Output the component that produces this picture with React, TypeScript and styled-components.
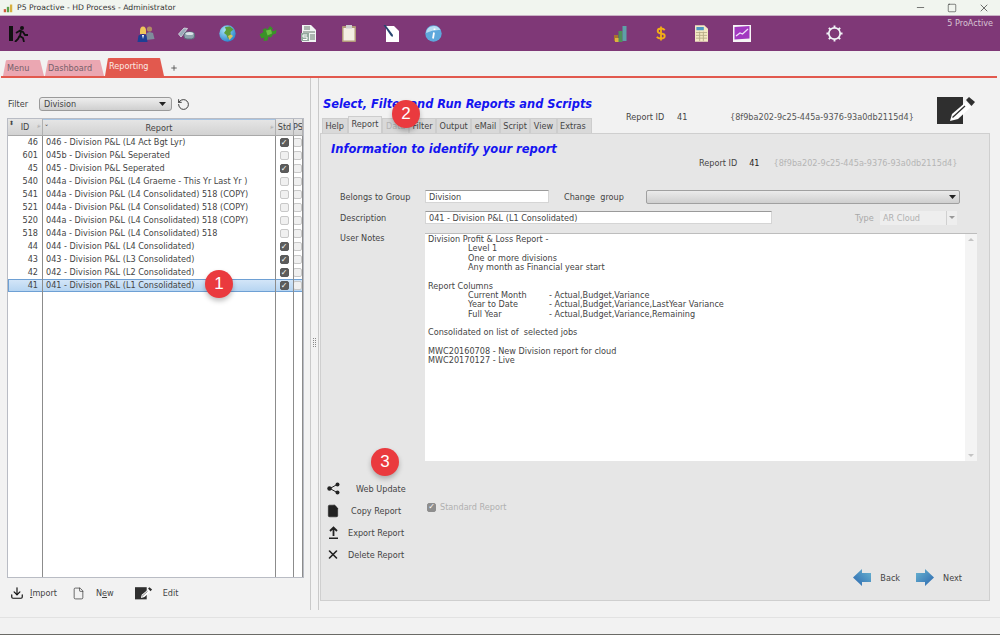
import React from "react";
import styled, { createGlobalStyle } from "styled-components";
import { Download, File, Minus, Plus, RotateCcw, Square, X } from "lucide-react";

type ReportRow = {
  id: string;
  name: string;
  std: boolean;
  selected?: boolean;
};

const reports: ReportRow[] = [
  { id: "46", name: "046 - Division P&L (L4 Act Bgt Lyr)", std: true },
  { id: "601", name: "045b - Division P&L Seperated", std: false },
  { id: "45", name: "045 - Division P&L Seperated", std: true },
  { id: "540", name: "044a - Division P&L (L4 Graeme - This Yr Last Yr )", std: false },
  { id: "541", name: "044a - Division P&L (L4 Consolidated) 518 (COPY)", std: false },
  { id: "521", name: "044a - Division P&L (L4 Consolidated) 518 (COPY)", std: false },
  { id: "520", name: "044a - Division P&L (L4 Consolidated) 518 (COPY)", std: false },
  { id: "518", name: "044a - Division P&L (L4 Consolidated) 518", std: false },
  { id: "44", name: "044 - Division P&L (L4 Consolidated)", std: true },
  { id: "43", name: "043 - Division P&L (L3 Consolidated)", std: true },
  { id: "42", name: "042 - Division P&L (L2 Consolidated)", std: true },
  { id: "41", name: "041 - Division P&L (L1 Consolidated)", std: true, selected: true },
];

const wizardTabs = ["Help", "Report", "Data", "Filter", "Output", "eMail", "Script", "View", "Extras"];

const GlobalStyle = createGlobalStyle`
  html, body {
    margin: 0;
    padding: 0;
    width: 1000px;
    height: 635px;
    overflow: hidden;
    background: #f2f2f2;
    font-family: "DejaVu Sans", sans-serif;
    font-size: 8.15px;
    color: #444;
  }
`;

const EditIcon = ({ small }: { small?: boolean }) => (
  <svg width={small ? 18 : 40} height={small ? 13 : 28} viewBox="0 0 40 28">
    <rect x="0" y="0" width="26" height="27" fill="#2f2f2f" />
    <path d="M13 24 L15 17 L29 5 L34 10 L21 22 Z" fill="#fff" />
    <path d="M15.500 20.500 L28 9" stroke="#2f2f2f" strokeWidth="1.300" />
    <path d="M29 3 L32 0 L38 5 L34.500 9 Z" fill="#2f2f2f" />
  </svg>
);

const ExitIcon = () => (
  <svg width="20" height="16" viewBox="0 0 20 16">
    <rect x="0" y="0" width="4" height="15" fill="#111" />
    <circle cx="13" cy="2" r="2" fill="#111" />
    <path d="M7 7 L11 4.500 L14 6 L16 9 L19 9 M12 5 L11 10 L14 12 L15 16 M10.500 10 L9 13 L6 16" stroke="#111" strokeWidth="1.800" fill="none" />
  </svg>
);

const PeopleIcon = () => (
  <svg width="18" height="16" viewBox="0 0 18 16">
    <circle cx="12.500" cy="3" r="2.600" fill="#b08a66" />
    <path d="M9 14 L9.500 7 L12.500 6 L16 7 L17.500 13 Z" fill="#7f8c9c" />
    <path d="M3 5 Q3 0.500 6 0.500 Q9 0.500 9 5 L9 8 L3 8 Z" fill="#efc75a" />
    <path d="M0.500 16 L1.500 9.500 L6 8 L9.500 9.500 L10.500 16 Z" fill="#1d3f94" />
    <path d="M5 9 L7 9 L6 13 Z" fill="#fff" />
  </svg>
);

const LinkIcon = () => (
  <svg width="17" height="13" viewBox="0 0 17 13">
    <path d="M0.500 7 L6 1 L9.500 1.500 L5 7.500 L3 10 Z" fill="#9aabb8" stroke="#e6ecef" strokeWidth="0.700" />
    <rect x="6" y="5" width="10.500" height="7" rx="3" fill="#8fa2ae" stroke="#5b6f7c" strokeWidth="1" />
    <ellipse cx="11.500" cy="6.500" rx="4" ry="1.600" fill="#dbe4e9" />
  </svg>
);

const GlobeIcon = () => (
  <svg width="17" height="17" viewBox="0 0 17 17">
    <defs>
      <radialGradient id="globeSea" cx="0.350" cy="0.300" r="0.800">
        <stop offset="0" stopColor="#a8e2f5" />
        <stop offset="1" stopColor="#1f7fca" />
      </radialGradient>
    </defs>
    <circle cx="8.500" cy="8.500" r="8.200" fill="url(#globeSea)" />
    <path d="M6 2 L11 1.500 L14.500 4.500 L11.500 7 L12 10.500 L9 14 L7.500 10 L5 8 L7 5 Z" fill="#5c9e3a" />
    <path d="M9 11 L12 9.500 L14 11 L10.500 15 Z" fill="#dcc35f" />
  </svg>
);

const PuzzleIcon = () => (
  <svg width="18" height="17" viewBox="0 0 18 16">
    <path d="M0.500 9 L4.500 6.500 L3.500 4 L7 2.500 L8 4.500 L11 0.500 L14 3 L12.500 5 L15 5.500 L17.500 4 L17 8 L14 9 L12 12 L9.500 11 L8.500 15 L4.500 15.500 L5.500 12 L2.500 13 Z" fill="#3a9228" />
    <path d="M7 5 L12 4 L13 8 L8.500 10 Z" fill="#6cc044" />
  </svg>
);

const InvoiceIcon = () => (
  <svg width="15" height="17" viewBox="0 0 15 17">
    <path d="M1 0 H10 L15 5 V17 H1 Z" fill="#f1f4f3" />
    <path d="M3 2 H9 M3 4 H9 M2 7 H14 M9 10 H14 M9 12 H14 M9 14 H14" stroke="#69786f" strokeWidth="1" />
    <path d="M0 8 H8 V16 H0 Z" fill="#93a89e" />
    <path d="M6 10 H2 V12 H6 V14.500 H2" stroke="#fff" strokeWidth="1" fill="none" />
  </svg>
);

const ClipboardIcon = () => (
  <svg width="14" height="17" viewBox="0 0 14 17">
    <rect x="0" y="1" width="14" height="16" rx="1" fill="#b39a7a" />
    <rect x="1.500" y="3" width="11" height="12.500" fill="#f4efe3" />
    <rect x="4" y="0" width="6" height="3.500" fill="#cfcfcf" />
  </svg>
);

const NoteIcon = () => (
  <svg width="17" height="17" viewBox="0 0 17 17">
    <path d="M3 1 H11 L16 6 V17 H3 Z" fill="#fff" />
    <path d="M0.500 0 L2.500 0 L10 10 L9.500 12 L8 11 Z" fill="#26456f" />
  </svg>
);

const InfoIcon = () => (
  <svg width="17" height="17" viewBox="0 0 17 17">
    <circle cx="8.500" cy="8.500" r="8.200" fill="#5ea8dc" />
    <path d="M1 8 A7.800 7.800 0 0 1 15.500 5 Q8 4.500 1 8 Z" fill="#b9dcf2" />
    <path d="M9.500 3.500 V5 M9 7.500 L8 13.500" stroke="#fff" strokeWidth="1.800" />
  </svg>
);

const ChartIcon = () => (
  <svg width="13" height="16" viewBox="0 0 13 16">
    <rect x="0" y="9" width="4" height="6" fill="#a8742c" />
    <rect x="1" y="12" width="4" height="4" fill="#e0b040" />
    <rect x="4.500" y="5" width="4" height="11" fill="#4f8f58" />
    <rect x="8.500" y="0" width="4" height="15" fill="#5ea0a8" />
  </svg>
);

const DollarIcon = () => (
  <svg width="10" height="17" viewBox="0 0 12 18">
    <path d="M10.500 5 Q9 3 6 3 Q2 3 2 6 Q2 8.500 6 9 Q10.500 9.500 10.500 12 Q10.500 15 6 15 Q2.500 15 1 13 M6 0.500 V17.500" stroke="#f2ae16" strokeWidth="2.200" fill="none" />
  </svg>
);

const SheetIcon = () => (
  <svg width="13" height="17" viewBox="0 0 14 18">
    <path d="M0 0 H10 L14 4 V18 H0 Z" fill="#f4e8c4" />
    <rect x="1.500" y="2" width="8" height="3.500" fill="#4f97c4" />
    <path d="M1 8 H13 M1 11 H13 M1 14 H13 M5 7 V17 M9 7 V17" stroke="#b9ad88" strokeWidth="1" />
  </svg>
);

const GraphIcon = () => (
  <svg width="18" height="17" viewBox="0 0 18 17">
    <rect x="0" y="0" width="18" height="17" fill="#f6f6f6" />
    <path d="M1.500 2 L16.500 1 V13.500 L1.500 14.500 Z" fill="#a238c0" />
    <path d="M3 11 L7 8 L9.500 9 L15 4" stroke="#f0e0f6" strokeWidth="1.300" fill="none" />
  </svg>
);

const GearIcon = () => (
  <svg width="17" height="17" viewBox="0 0 18 18">
    <circle cx="9" cy="9" r="6" fill="none" stroke="#f2f4f8" strokeWidth="1.800" />
    <path d="M9 0.500 V3 M9 15 V17.500 M0.500 9 H3 M15 9 H17.500 M3 3 L4.800 4.800 M13.200 13.200 L15 15 M3 15 L4.800 13.200 M13.200 4.800 L15 3" stroke="#f2f4f8" strokeWidth="2" />
  </svg>
);

const ShareIcon = () => (
  <svg width="13" height="13" viewBox="0 0 13 13">
    <path d="M10 2.500 L3 6.500 L10 10.500" stroke="#222" strokeWidth="1" fill="none" />
    <circle cx="10.500" cy="2.500" r="2" fill="#222" />
    <circle cx="2.500" cy="6.500" r="2.200" fill="#222" />
    <circle cx="10.500" cy="10.500" r="2" fill="#222" />
  </svg>
);

const ExportIcon = () => (
  <svg width="11" height="13" viewBox="0 0 11 13">
    <path d="M5.500 10 V1.500 M2 5 L5.500 1.500 L9 5" stroke="#222" strokeWidth="1.800" fill="none" />
    <rect x="1" y="11.500" width="9" height="1.500" fill="#222" />
  </svg>
);

const ArrowIcon = ({ back }: { back?: boolean }) => (
  <svg width="18" height="17" viewBox="0 0 18 17" style={back ? { transform: "scaleX(-1)" } : undefined}>
    <defs>
      <linearGradient id={back ? "arrB" : "arrN"} x1="0" x2="1" y1="0" y2="1">
        <stop offset="0" stopColor="#6bb6d2" />
        <stop offset="1" stopColor="#2a66ae" />
      </linearGradient>
    </defs>
    <path d="M0 4 H9 V0 L18 8.500 L9 17 V13 H0 Z" fill={`url(#${back ? "arrB" : "arrN"})`} />
  </svg>
);

const SelectArrow = () => (
  <svg width="7" height="4" viewBox="0 0 7 4">
    <path d="M0 0 H7 L3.500 4 Z" fill="#222" />
  </svg>
);

const App: React.FC = () => {
  return (
    <Page>
      <GlobalStyle />
      <TitleBar>
        <TitleLeft>
          <svg width="10" height="10" viewBox="0 0 13 11">
            <rect x="1" y="7" width="3" height="4" fill="#d05a3c" />
            <rect x="5" y="4" width="3" height="7" fill="#5ca04c" />
            <rect x="9" y="1" width="3" height="10" fill="#d8b040" />
          </svg>
          <span>P5 Proactive - HD Process - Administrator</span>
        </TitleLeft>
        <WindowButtons>
          <Minus size={11} strokeWidth={1.2} />
          <Square size={10} strokeWidth={1.2} />
          <X size={12} strokeWidth={1.2} />
        </WindowButtons>
      </TitleBar>

      <Toolbar>
        <ExitSlot>
          <ExitIcon />
        </ExitSlot>
        <ToolGroup $offset={91}>
          <ToolSlot><PeopleIcon /></ToolSlot>
          <ToolSlot><LinkIcon /></ToolSlot>
          <ToolSlot><GlobeIcon /></ToolSlot>
          <ToolSlot><PuzzleIcon /></ToolSlot>
          <ToolSlot><InvoiceIcon /></ToolSlot>
          <ToolSlot><ClipboardIcon /></ToolSlot>
          <ToolSlot $wide><NoteIcon /></ToolSlot>
          <ToolSlot><InfoIcon /></ToolSlot>
        </ToolGroup>
        <ToolGroup $offset={147}>
          <ToolSlot><ChartIcon /></ToolSlot>
          <ToolSlot><DollarIcon /></ToolSlot>
          <ToolSlot><SheetIcon /></ToolSlot>
          <ToolSlot><GraphIcon /></ToolSlot>
        </ToolGroup>
        <ToolGroup $offset={52}>
          <ToolSlot><GearIcon /></ToolSlot>
        </ToolGroup>
        <Brand>5 ProActive</Brand>
      </Toolbar>

      <TabStrip>
        <AppTab $w={41} $left={4}>Menu</AppTab>
        <AppTab $w={59} $left={3}>Dashboard</AppTab>
        <AppTab $active $w={59} $left={4}>Reporting</AppTab>
        <AddTab><Plus size={8} strokeWidth={2.4} /></AddTab>
      </TabStrip>

      <Workspace>
        <LeftPane>
          <FilterRow>
            <FilterLabel>Filter</FilterLabel>
            <FilterSelect>
              <span>Division</span>
              <SelectArrow />
            </FilterSelect>
            <RotateCcw size={13} color="#222" strokeWidth={1.6} />
          </FilterRow>

          <Table>
            <HeaderRow>
              <HeaderCell><SortMark>⬍</SortMark>ID<SearchMark>⌕</SearchMark></HeaderCell>
              <HeaderCell $current><SortMark>⌄</SortMark>Report<SearchMark>⌕</SearchMark></HeaderCell>
              <HeaderCell>Std</HeaderCell>
              <HeaderCell>PS</HeaderCell>
            </HeaderRow>
            <TableBody>
              {reports.map((r) => (
                <Row key={r.id} $selected={r.selected}>
                  <IdCell>{r.id}</IdCell>
                  <NameCell>{r.name}</NameCell>
                  <CheckCell><Check $on={r.std} /></CheckCell>
                  <CheckCell><Check /></CheckCell>
                </Row>
              ))}
              <FillerRow>
                <IdCell />
                <NameCell />
                <CheckCell />
                <CheckCell />
              </FillerRow>
            </TableBody>
          </Table>

          <TableActions>
            <TableAction>
              <Download size={14} color="#111" strokeWidth={2} />
              <span><u>I</u>mport</span>
            </TableAction>
            <TableAction $gap={11} $left={15}>
              <File size={13} color="#333" strokeWidth={1.3} />
              <span>N<u>e</u>w</span>
            </TableAction>
            <TableAction $gap={10} $left={21}>
              <EditIcon small />
              <span>Edit</span>
            </TableAction>
          </TableActions>
        </LeftPane>

        <Splitter>
          <SplitHandle />
        </Splitter>

        <RightPane>
          <TitleRow>
            <MainHeading>Select, Filter and Run Reports and Scripts</MainHeading>
            <EditIconWrap><EditIcon /></EditIconWrap>
          </TitleRow>

          <TabsRow>
            <WizardTabs>
              {wizardTabs.map((t) => (
                <WizardTab key={t} $active={t === "Report"} $disabled={t === "Data"}>{t}</WizardTab>
              ))}
            </WizardTabs>
            <OuterId>
              <IdLabel>Report ID</IdLabel>
              <IdValue>41</IdValue>
              <Guid>{"{8f9ba202-9c25-445a-9376-93a0db2115d4}"}</Guid>
            </OuterId>
          </TabsRow>

          <Panel>
            <SubHeading>Information to identify your report</SubHeading>
            <InnerId>
              <span>Report ID</span>
              <InnerIdValue>41</InnerIdValue>
              <InnerGuid>{"{8f9ba202-9c25-445a-9376-93a0db2115d4}"}</InnerGuid>
            </InnerId>

            <FormRow $top={22}>
              <FieldLabel>Belongs to Group</FieldLabel>
              <TextField $w={124}>Division</TextField>
              <ChangeLabel>Change&nbsp; group</ChangeLabel>
              <GroupSelect><SelectArrow /></GroupSelect>
            </FormRow>
            <FormRow $top={8}>
              <FieldLabel>Description</FieldLabel>
              <TextField $w={347}>041 - Division P&amp;L (L1 Consolidated)</TextField>
              <TypeLabel>Type</TypeLabel>
              <TypeSelect>
                <span>AR Cloud</span>
                <TypeArrow />
              </TypeSelect>
            </FormRow>
            <NotesRow>
              <FieldLabel>User Notes</FieldLabel>
              <Notes>
                <NoteBody>
                  <NoteLine>Division Profit &amp; Loss Report -</NoteLine>
                  <NoteLine $indent>Level 1</NoteLine>
                  <NoteLine $indent>One or more divisions</NoteLine>
                  <NoteLine $indent>Any month as Financial year start</NoteLine>
                  <NoteLine />
                  <NoteLine>Report Columns</NoteLine>
                  <NoteLine $indent><NoteKey>Current Month</NoteKey>- Actual,Budget,Variance</NoteLine>
                  <NoteLine $indent><NoteKey>Year to Date</NoteKey>- Actual,Budget,Variance,LastYear Variance</NoteLine>
                  <NoteLine $indent><NoteKey>Full Year</NoteKey>- Actual,Budget,Variance,Remaining</NoteLine>
                  <NoteLine />
                  <NoteLine>Consolidated on list of&nbsp; selected jobs</NoteLine>
                  <NoteLine />
                  <NoteLine>MWC20160708 - New Division report for cloud</NoteLine>
                  <NoteLine>MWC20170127 - Live</NoteLine>
                </NoteBody>
                <NoteScroll>
                  <ScrollArrow $dir="up" />
                  <ScrollArrow $dir="down" />
                </NoteScroll>
              </Notes>
            </NotesRow>

            <LowerArea>
              <ActionList>
                <ActionItem>
                  <ActionIcon><ShareIcon /></ActionIcon>
                  <ActionText $pad={16}>Web Update</ActionText>
                </ActionItem>
                <ActionItem>
                  <ActionIcon><File size={14} color="#222" fill="#222" strokeWidth={1} /></ActionIcon>
                  <ActionText $pad={11}>Copy Report</ActionText>
                </ActionItem>
                <ActionItem>
                  <ActionIcon><ExportIcon /></ActionIcon>
                  <ActionText $pad={8}>Export Report</ActionText>
                </ActionItem>
                <ActionItem>
                  <ActionIcon><X size={17} color="#222" strokeWidth={2.8} /></ActionIcon>
                  <ActionText $pad={8}>Delete Report</ActionText>
                </ActionItem>
              </ActionList>
              <StandardCheck>
                <Check $on $muted />
                <span>Standard Report</span>
              </StandardCheck>
            </LowerArea>

            <WizardNav>
              <NavButton>
                <ArrowIcon back />
                <span>Back</span>
              </NavButton>
              <NavButton>
                <ArrowIcon />
                <span>Next</span>
              </NavButton>
            </WizardNav>
          </Panel>
        </RightPane>
      </Workspace>

      <StatusBar />

      <Badge $x={219} $y={284}>1</Badge>
      <Badge $x={406} $y={114}>2</Badge>
      <Badge $x={385} $y={462}>3</Badge>
    </Page>
  );
};

export default App;

const Page = styled.div`
  position: relative;
  width: 1000px;
  height: 635px;
  display: flex;
  flex-direction: column;
  overflow: hidden;
  border-bottom: 1px solid #6a6a66;
  box-sizing: border-box;
`;

const TitleBar = styled.div`
  height: 15px;
  flex: none;
  display: flex;
  justify-content: space-between;
  align-items: center;
  background: #f1f5ef;
  font-size: 7.700px;
  color: #333;
`;

const TitleLeft = styled.div`
  display: flex;
  align-items: center;
  gap: 4px;
  padding-left: 3px;
`;

const WindowButtons = styled.div`
  display: flex;
  align-items: center;
  gap: 21px;
  padding-right: 10px;
  color: #111;
`;

const Toolbar = styled.div`
  position: relative;
  height: 36px;
  flex: none;
  display: flex;
  align-items: center;
  background: #7f3877;
  border-top: 1px solid #c9b3c6;
  box-sizing: border-box;
`;

const ExitSlot = styled.div`
  width: 35px;
  padding-left: 9px;
  box-sizing: border-box;
  display: flex;
`;

const ToolGroup = styled.div<{ $offset: number }>`
  display: flex;
  align-items: center;
  margin-left: ${(p) => p.$offset}px;
`;

const ToolSlot = styled.div<{ $wide?: boolean }>`
  width: ${(p) => (p.$wide ? 44 : 40.500)}px;
  display: flex;
  justify-content: center;
`;

const Brand = styled.div`
  position: absolute;
  right: 7px;
  top: 2px;
  color: #d8c4d4;
`;

const TabStrip = styled.div`
  height: 27px;
  flex: none;
  display: flex;
  align-items: flex-end;
  padding-left: 2px;
  border-bottom: 2px solid #e2594e;
  box-sizing: border-box;
  margin-left: 1px;
  margin-right: 3px;
`;

const AppTab = styled.div<{ $active?: boolean; $w: number; $left: number }>`
  width: ${(p) => p.$w}px;
  height: ${(p) => (p.$active ? 18 : 16)}px;
  line-height: ${(p) => (p.$active ? 17 : 16)}px;
  padding-left: ${(p) => p.$left}px;
  margin-right: ${(p) => (p.$active ? 0 : 1)}px;
  box-sizing: border-box;
  background: ${(p) => (p.$active ? "#e2594e" : "#eba7b2")};
  color: ${(p) => (p.$active ? "#fbe9e6" : "#76606a")};
  border-radius: 5px 5px 0 0;
  clip-path: polygon(3px 0, calc(100% - 4px) 0, 100% 100%, 0 100%);
`;

const AddTab = styled.div`
  display: flex;
  align-items: center;
  height: 16px;
  margin-left: 6px;
  color: #444;
`;

const Workspace = styled.div`
  flex: 1;
  min-height: 0;
  display: flex;
  background: #f2f2f2;
`;

const LeftPane = styled.div`
  width: 310px;
  flex: none;
  display: flex;
  flex-direction: column;
  padding: 18px 6px 0 7px;
  box-sizing: border-box;
`;

const FilterRow = styled.div`
  height: 16px;
  display: flex;
  align-items: center;
  margin-bottom: 6px;
`;

const FilterLabel = styled.div`
  width: 32px;
  padding-left: 1px;
  box-sizing: border-box;
`;

const FilterSelect = styled.div`
  width: 133px;
  height: 14px;
  margin-right: 5px;
  padding: 0 5px 0 4px;
  display: flex;
  align-items: center;
  justify-content: space-between;
  box-sizing: border-box;
  border: 1px solid #9a9a9a;
  border-radius: 3px;
  background: linear-gradient(#eeeeee, #cfcfcf);
`;

const Table = styled.div`
  width: 297px;
  height: 460px;
  display: flex;
  flex-direction: column;
  border: 1px solid #b9bcc4;
  box-sizing: border-box;
  background: #fff;
`;

const HeaderRow = styled.div`
  height: 17px;
  flex: none;
  display: grid;
  grid-template-columns: 35px 233px 18px 1fr;
  box-sizing: border-box;
  background: linear-gradient(#e6e6e6, #d2d2d2);
  border-bottom: 1px solid #a9a9a9;
`;

const HeaderCell = styled.div<{ $current?: boolean }>`
  position: relative;
  display: flex;
  align-items: center;
  justify-content: center;
  overflow: hidden;
  border-right: 1px solid #b0b0b0;
  border-top: ${(p) => (p.$current ? "1px solid #a8c4e2" : "none")};
  color: #444;
`;

const SortMark = styled.span`
  position: absolute;
  left: 1px;
  top: 0;
  font-size: 6px;
`;

const SearchMark = styled.span`
  position: absolute;
  right: 1px;
  top: 3px;
  font-size: 7px;
  color: #888;
`;

const TableBody = styled.div`
  flex: 1;
  min-height: 0;
  display: flex;
  flex-direction: column;
`;

const Row = styled.div<{ $selected?: boolean }>`
  height: 13px;
  flex: none;
  display: grid;
  grid-template-columns: 35px 233px 18px 1fr;
  background: ${(p) => (p.$selected ? "linear-gradient(#d5e7f8, #b4d3f1)" : "transparent")};
  box-shadow: ${(p) => (p.$selected ? "inset 0 0 0 1px #6ea0d4" : "none")};
`;

const FillerRow = styled(Row)`
  flex: 1;
  height: auto;
`;

const IdCell = styled.div`
  line-height: 13px;
  text-align: right;
  padding-right: 4px;
  box-sizing: border-box;
  border-right: 1px solid #8c8c8c;
`;

const NameCell = styled.div`
  line-height: 13px;
  padding-left: 3px;
  white-space: nowrap;
  overflow: hidden;
  border-right: 1px solid #8c8c8c;
`;

const CheckCell = styled.div`
  display: flex;
  justify-content: center;
  align-items: center;
  padding-right: 1px;
  border-right: 1px solid #8c8c8c;
  overflow: hidden;
`;

const Check = styled.span<{ $on?: boolean; $muted?: boolean }>`
  width: 9px;
  height: 9px;
  flex: none;
  box-sizing: border-box;
  border-radius: 2px;
  display: inline-flex;
  align-items: center;
  justify-content: center;
  font-size: 8px;
  font-weight: 700;
  line-height: 1;
  border: 1px solid ${(p) => (p.$on ? (p.$muted ? "#8e8e8e" : "#5a5a5a") : "#c8c8c8")};
  background: ${(p) => (p.$on ? (p.$muted ? "#8e8e8e" : "#5c5c5c") : "#f0f0f0")};
  color: #fff;
  &::after {
    content: "${(p) => (p.$on ? "✓" : "")}";
  }
`;

const TableActions = styled.div`
  display: flex;
  align-items: center;
  padding: 8px 0 0 3px;
`;

const TableAction = styled.div<{ $gap?: number; $left?: number }>`
  display: flex;
  align-items: center;
  gap: ${(p) => p.$gap ?? 6}px;
  margin-left: ${(p) => p.$left ?? 0}px;
`;

const Splitter = styled.div`
  width: 7px;
  flex: none;
  height: 532px;
  display: flex;
  align-items: flex-start;
  justify-content: center;
  border-left: 1px solid #c9c9c9;
  border-right: 1px solid #c9c9c9;
`;

const SplitHandle = styled.div`
  width: 1px;
  height: 9px;
  margin-top: 260px;
  border-left: 1px dotted #888;
  border-right: 1px dotted #888;
`;

const RightPane = styled.div`
  flex: 1;
  min-width: 0;
  display: flex;
  flex-direction: column;
  padding: 18px 10px 16px 1px;
`;

const TitleRow = styled.div`
  display: flex;
  justify-content: space-between;
  height: 20px;
  padding-left: 3px;
`;

const MainHeading = styled.div`
  font-size: 11.400px;
  font-weight: 700;
  font-style: italic;
  color: #1414f0;
  line-height: 16px;
`;

const EditIconWrap = styled.div`
  margin-top: 1px;
  margin-right: 13px;
  position: relative;
  z-index: 1;
`;

const TabsRow = styled.div`
  height: 17px;
  display: flex;
  align-items: flex-end;
  margin-left: 2px;
  position: relative;
`;

const WizardTabs = styled.div`
  display: flex;
  align-items: flex-end;
`;

const WizardTab = styled.div<{ $active?: boolean; $disabled?: boolean }>`
  height: ${(p) => (p.$active ? 17 : 15)}px;
  line-height: 14px;
  padding: 0 ${(p) => (p.$active ? 3 : 2.500)}px;
  box-sizing: border-box;
  background: ${(p) => (p.$active ? "#e6e6e6" : "#d9d9d9")};
  border: 1px solid #cdcdcd;
  border-bottom: none;
  color: ${(p) => (p.$disabled ? "#b5b5b5" : "#444")};
  &:last-child {
    padding-right: 5px;
  }
`;

const OuterId = styled.div`
  position: absolute;
  left: 304px;
  top: -4px;
  display: flex;
`;

const IdLabel = styled.span`
  width: 51px;
`;

const IdValue = styled.span`
  width: 53px;
`;

const Guid = styled.span`
  color: #555;
  white-space: nowrap;
`;

const Panel = styled.div`
  flex: 1;
  min-height: 0;
  display: flex;
  flex-direction: column;
  padding: 7px 12px 14px 10px;
  box-sizing: border-box;
  background: #e6e6e6;
  border: 1px solid #cfcfcf;
`;

const SubHeading = styled.div`
  font-size: 11.500px;
  font-weight: 700;
  font-style: italic;
  color: #1414f0;
  line-height: 17px;
`;

const InnerId = styled.div`
  display: flex;
  padding-left: 368px;
  line-height: 10px;
  height: 10px;
`;

const InnerIdValue = styled.span`
  margin-left: 12px;
  color: #222;
`;

const InnerGuid = styled.span`
  margin-left: 14px;
  color: #b5b5b5;
  white-space: nowrap;
`;

const FormRow = styled.div<{ $top: number }>`
  display: flex;
  align-items: center;
  height: 13px;
  margin-top: ${(p) => p.$top}px;
  padding-left: 9px;
`;

const FieldLabel = styled.div`
  width: 85px;
  flex: none;
`;

const TextField = styled.div<{ $w: number }>`
  width: ${(p) => p.$w}px;
  height: 13px;
  line-height: 12px;
  padding-left: 3px;
  box-sizing: border-box;
  background: #fff;
  border: 1px solid #d5d5d5;
  border-top-color: #9a9a9a;
  white-space: nowrap;
`;

const ChangeLabel = styled.div`
  width: 82px;
  margin-left: 15px;
  flex: none;
`;

const GroupSelect = styled.div`
  width: 314px;
  height: 14px;
  display: flex;
  align-items: center;
  justify-content: flex-end;
  padding-right: 3px;
  box-sizing: border-box;
  border: 1px solid #a0a0a0;
  border-radius: 2px;
  background: linear-gradient(#ebebeb, #cfcfcf);
`;

const TypeLabel = styled.div`
  margin-left: 83px;
  width: 25px;
  flex: none;
  color: #a8a8a8;
`;

const TypeSelect = styled.div`
  width: 77px;
  height: 14px;
  display: flex;
  align-items: center;
  justify-content: space-between;
  padding-left: 3px;
  box-sizing: border-box;
  background: #eeeeee;
  color: #b0b0b0;
`;

const TypeArrow = styled.span`
  width: 10px;
  height: 14px;
  border-left: 1px solid #d0d0d0;
  display: flex;
  align-items: center;
  justify-content: center;
  &::after {
    content: "";
    border-left: 3px solid transparent;
    border-right: 3px solid transparent;
    border-top: 3px solid #999;
  }
`;

const NotesRow = styled.div`
  display: flex;
  margin-top: 9px;
  height: 228px;
  padding-left: 9px;
`;

const Notes = styled.div`
  width: 553px;
  display: flex;
  background: #fff;
  border-top: 1px solid #bdbdbd;
  box-sizing: border-box;
`;

const NoteBody = styled.div`
  flex: 1;
  padding: 1px 3px;
  line-height: 9.350px;
`;

const NoteLine = styled.div<{ $indent?: boolean }>`
  display: flex;
  height: 9.350px;
  padding-left: ${(p) => (p.$indent ? 40 : 0)}px;
  white-space: pre;
`;

const NoteKey = styled.span`
  width: 81px;
`;

const NoteScroll = styled.div`
  width: 12px;
  display: flex;
  flex-direction: column;
  justify-content: space-between;
  align-items: center;
  padding: 4px 0;
  box-sizing: border-box;
  background: #f4f4f4;
`;

const ScrollArrow = styled.span<{ $dir: "up" | "down" }>`
  border-left: 3px solid transparent;
  border-right: 3px solid transparent;
  ${(p) => (p.$dir === "up" ? "border-bottom: 3px solid #c4c4c4;" : "border-top: 3px solid #c4c4c4;")}
`;

const LowerArea = styled.div`
  display: flex;
  margin-top: 20px;
`;

const ActionList = styled.div`
  width: 101px;
  display: flex;
  flex-direction: column;
  gap: 7px;
  margin-left: -5px;
`;

const ActionItem = styled.div`
  height: 15px;
  display: flex;
  align-items: center;
`;

const ActionIcon = styled.span`
  width: 14px;
  display: flex;
  justify-content: center;
`;

const ActionText = styled.span<{ $pad: number }>`
  padding-left: ${(p) => p.$pad}px;
  white-space: nowrap;
`;

const StandardCheck = styled.div`
  display: flex;
  align-items: center;
  gap: 4px;
  height: 14px;
  margin-top: 19px;
  color: #b0b0b0;
`;

const WizardNav = styled.div`
  margin-top: auto;
  display: flex;
  justify-content: flex-end;
  gap: 16px;
  padding-right: 15px;
`;

const NavButton = styled.div`
  display: flex;
  align-items: center;
  gap: 9px;
`;

const StatusBar = styled.div`
  height: 16px;
  flex: none;
  background: #f2f2f2;
  border-top: 1px solid #e2e2e2;
`;

const Badge = styled.div<{ $x: number; $y: number }>`
  position: absolute;
  left: ${(p) => p.$x - 14}px;
  top: ${(p) => p.$y - 14}px;
  width: 28px;
  height: 28px;
  border-radius: 50%;
  background: #ea3a3e;
  color: #fff;
  font-family: "Liberation Sans", sans-serif;
  font-size: 17px;
  line-height: 28px;
  text-align: center;
  box-shadow: 0 3px 5px rgba(0, 0, 0, 0.25);
`;
